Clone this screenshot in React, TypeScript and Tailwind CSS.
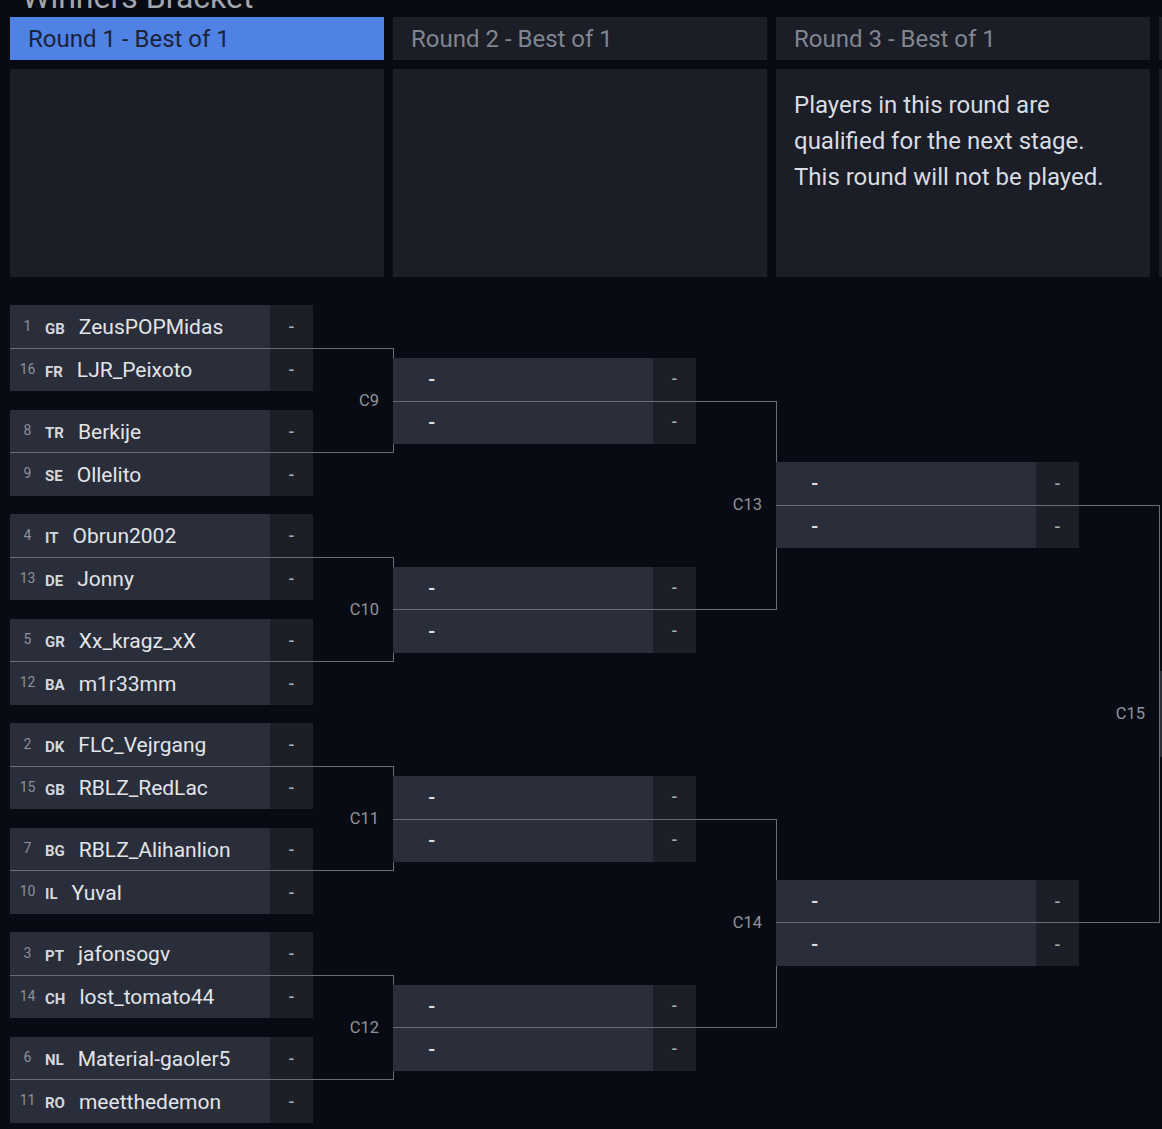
import React from 'react';

type Player = { seed: number; flag: string; name: string };

const round1: Player[][] = [
  [
    { seed: 1, flag: 'GB', name: 'ZeusPOPMidas' },
    { seed: 16, flag: 'FR', name: 'LJR_Peixoto' },
  ],
  [
    { seed: 8, flag: 'TR', name: 'Berkije' },
    { seed: 9, flag: 'SE', name: 'Ollelito' },
  ],
  [
    { seed: 4, flag: 'IT', name: 'Obrun2002' },
    { seed: 13, flag: 'DE', name: 'Jonny' },
  ],
  [
    { seed: 5, flag: 'GR', name: 'Xx_kragz_xX' },
    { seed: 12, flag: 'BA', name: 'm1r33mm' },
  ],
  [
    { seed: 2, flag: 'DK', name: 'FLC_Vejrgang' },
    { seed: 15, flag: 'GB', name: 'RBLZ_RedLac' },
  ],
  [
    { seed: 7, flag: 'BG', name: 'RBLZ_Alihanlion' },
    { seed: 10, flag: 'IL', name: 'Yuval' },
  ],
  [
    { seed: 3, flag: 'PT', name: 'jafonsogv' },
    { seed: 14, flag: 'CH', name: 'lost_tomato44' },
  ],
  [
    { seed: 6, flag: 'NL', name: 'Material-gaoler5' },
    { seed: 11, flag: 'RO', name: 'meetthedemon' },
  ],
];

const rounds = [
  { title: 'Round 1 - Best of 1', matches: 8, labels: ['C9', 'C10', 'C11', 'C12'] },
  { title: 'Round 2 - Best of 1', matches: 4, labels: ['C13', 'C14'] },
  { title: 'Round 3 - Best of 1', matches: 2, labels: ['C15'] },
  { title: 'Round 4 - Best of 1', matches: 1, labels: [] as string[] },
];

const PlayerRow: React.FC<{ p?: Player }> = ({ p }) => (
  <div className="flex h-[43px]">
    <div className="w-[260px] bg-[#2a2e3a] flex items-center whitespace-nowrap pt-[2px]">
      {p ? (
        <>
          <span className="w-[35px] text-center text-[14px] text-[#8c9099] -mt-[3px]">{p.seed}</span>
          <span className="text-[15px] font-bold text-[#d4d7dc] mt-[2px]">{p.flag}</span>
          <span className="ml-[14px] text-[21px] text-[#e2e4e8]">{p.name}</span>
        </>
      ) : (
        <span className="pl-[35px] text-[19px] font-bold text-[#dcdfe4]">-</span>
      )}
    </div>
    <div className="w-[43px] bg-[#1c1f28] flex items-center justify-center text-[17px] font-medium text-[#a8acb3]">-</div>
  </div>
);

const Match: React.FC<{ players?: Player[] }> = ({ players }) => (
  <div className="w-[303px] flex flex-col">
    <PlayerRow p={players?.[0]} />
    <PlayerRow p={players?.[1]} />
  </div>
);

const Slot: React.FC<{ players?: Player[] }> = ({ players }) => (
  <div className="flex-1 flex items-center">
    <Match players={players} />
  </div>
);

const App: React.FC = () => {
  return (
    <div className="min-h-screen w-full overflow-hidden bg-[#080b14] font-['Roboto',sans-serif]">
      <div className="w-max px-[10px]">
        <div className="-mt-[18px] mb-[5px] h-[30px] pl-[12px] text-[32px] leading-[30px] text-[#a2a6ad]">
          Winners Bracket
        </div>

        <div className="flex gap-[9px]">
          {rounds.map((r, i) => (
            <div
              key={r.title}
              className={
                i === 0
                  ? 'w-[374px] h-[43px] flex items-center pl-[18px] bg-[#5082e6] text-[24px] text-[#1a2338] whitespace-nowrap'
                  : 'w-[374px] h-[43px] flex items-center pl-[18px] bg-[#1b1e27] text-[24px] text-[#80858f] whitespace-nowrap'
              }
            >
              {r.title}
            </div>
          ))}
        </div>

        <div className="flex gap-[9px] mt-[9px]">
          {rounds.map((r, i) => (
            <div key={r.title} className="w-[374px] h-[208px] bg-[#1b1e27] p-[18px] text-[24px] leading-[36px] text-[#d9dce1]">
              {i === 2 && (
                <>
                  Players in this round are
                  <br />
                  qualified for the next stage.
                  <br />
                  This round will not be played.
                </>
              )}
            </div>
          ))}
        </div>

        <div className="flex gap-[9px] mt-[19px] h-[836px]">
          {rounds.map((r, ri) => (
            <div key={r.title} className="w-[374px] h-full flex flex-col">
              {r.matches === 1 ? (
                <Slot />
              ) : (
                r.labels.map((label, pi) => (
                  <div key={label} className="relative flex-1 flex flex-col">
                    <Slot players={ri === 0 ? round1[pi * 2] : undefined} />
                    <Slot players={ri === 0 ? round1[pi * 2 + 1] : undefined} />
                    <div className="absolute left-0 top-1/4 h-1/2 w-[384px] border-y border-r border-[#686c77] pointer-events-none">
                      <span className="absolute right-[14px] top-1/2 -translate-y-1/2 text-[16.5px] text-[#8f949c]">
                        {label}
                      </span>
                    </div>
                  </div>
                ))
              )}
            </div>
          ))}
        </div>
      </div>
    </div>
  );
};

export default App;
